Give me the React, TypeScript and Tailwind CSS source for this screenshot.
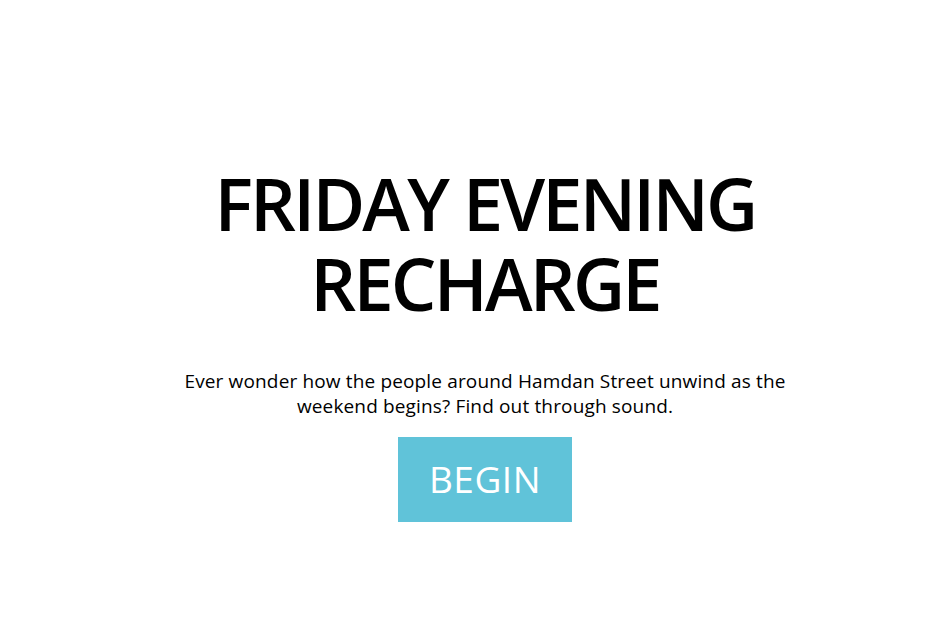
import React from "react";

export default function App() {
  return (
    <div className="w-[946px] h-[618px] bg-white flex flex-col items-center justify-center pt-[66px] pl-[24px] font-['Open_Sans',sans-serif] text-black">
      <h1 className="text-[72px] leading-[80px] font-semibold text-center tracking-[-2.8px]">
        FRIDAY EVENING
        <br />
        RECHARGE
      </h1>
      <p className="mt-[46px] w-[640px] text-center text-[19px] leading-[25px] tracking-[0.15px]">
        Ever wonder how the people around Hamdan Street unwind as the weekend begins? Find out through sound.
      </p>
      <button className="mt-[18px] w-[174px] h-[85px] bg-[#60c3d9] text-white text-[37px] tracking-[0.5px]">
        BEGIN
      </button>
    </div>
  );
}
